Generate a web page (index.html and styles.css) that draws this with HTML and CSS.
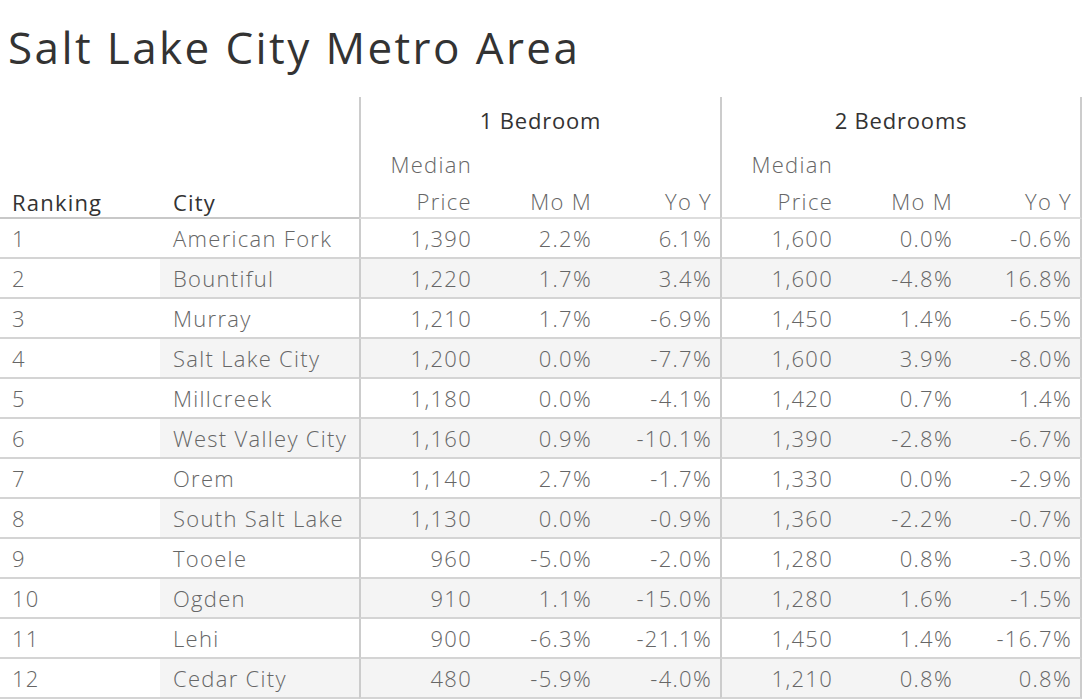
FILE: index.html
```html
<!DOCTYPE html>
<html lang="en">
<head>
<meta charset="utf-8">
<title>Salt Lake City Metro Area</title>
<link rel="stylesheet" href="styles.css">
</head>
<body>
<h1 class="title">Salt Lake City Metro Area</h1>
<table class="grid">
  <colgroup>
    <col class="c-rank">
    <col class="c-city">
    <col class="c-first">
    <col class="c-num">
    <col class="c-num">
    <col class="c-first">
    <col class="c-num">
    <col class="c-last">
  </colgroup>
  <thead>
    <tr class="h-group">
      <th class="hl" rowspan="2"><span class="lbl">Ranking</span></th>
      <th class="hl" rowspan="2"><span class="lbl">City</span></th>
      <th class="grp" colspan="3">1 Bedroom</th>
      <th class="grp" colspan="3">2 Bedrooms</th>
    </tr>
    <tr class="h-sub">
      <th class="sub first"><span class="lbl">Median<br>Price</span></th>
      <th class="sub"><span class="lbl">Mo M</span></th>
      <th class="sub"><span class="lbl">Yo Y</span></th>
      <th class="sub first"><span class="lbl">Median<br>Price</span></th>
      <th class="sub"><span class="lbl">Mo M</span></th>
      <th class="sub last"><span class="lbl">Yo Y</span></th>
    </tr>
  </thead>
  <tbody>
    <tr><td class="rank">1</td><td class="city">American Fork</td><td class="num first">1,390</td><td class="num">2.2%</td><td class="num">6.1%</td><td class="num first">1,600</td><td class="num">0.0%</td><td class="num last">-0.6%</td></tr>
    <tr class="alt"><td class="rank">2</td><td class="city">Bountiful</td><td class="num first">1,220</td><td class="num">1.7%</td><td class="num">3.4%</td><td class="num first">1,600</td><td class="num">-4.8%</td><td class="num last">16.8%</td></tr>
    <tr><td class="rank">3</td><td class="city">Murray</td><td class="num first">1,210</td><td class="num">1.7%</td><td class="num">-6.9%</td><td class="num first">1,450</td><td class="num">1.4%</td><td class="num last">-6.5%</td></tr>
    <tr class="alt"><td class="rank">4</td><td class="city">Salt Lake City</td><td class="num first">1,200</td><td class="num">0.0%</td><td class="num">-7.7%</td><td class="num first">1,600</td><td class="num">3.9%</td><td class="num last">-8.0%</td></tr>
    <tr><td class="rank">5</td><td class="city">Millcreek</td><td class="num first">1,180</td><td class="num">0.0%</td><td class="num">-4.1%</td><td class="num first">1,420</td><td class="num">0.7%</td><td class="num last">1.4%</td></tr>
    <tr class="alt"><td class="rank">6</td><td class="city">West Valley City</td><td class="num first">1,160</td><td class="num">0.9%</td><td class="num">-10.1%</td><td class="num first">1,390</td><td class="num">-2.8%</td><td class="num last">-6.7%</td></tr>
    <tr><td class="rank">7</td><td class="city">Orem</td><td class="num first">1,140</td><td class="num">2.7%</td><td class="num">-1.7%</td><td class="num first">1,330</td><td class="num">0.0%</td><td class="num last">-2.9%</td></tr>
    <tr class="alt"><td class="rank">8</td><td class="city">South Salt Lake</td><td class="num first">1,130</td><td class="num">0.0%</td><td class="num">-0.9%</td><td class="num first">1,360</td><td class="num">-2.2%</td><td class="num last">-0.7%</td></tr>
    <tr><td class="rank">9</td><td class="city">Tooele</td><td class="num first">960</td><td class="num">-5.0%</td><td class="num">-2.0%</td><td class="num first">1,280</td><td class="num">0.8%</td><td class="num last">-3.0%</td></tr>
    <tr class="alt"><td class="rank">10</td><td class="city">Ogden</td><td class="num first">910</td><td class="num">1.1%</td><td class="num">-15.0%</td><td class="num first">1,280</td><td class="num">1.6%</td><td class="num last">-1.5%</td></tr>
    <tr><td class="rank">11</td><td class="city">Lehi</td><td class="num first">900</td><td class="num">-6.3%</td><td class="num">-21.1%</td><td class="num first">1,450</td><td class="num">1.4%</td><td class="num last">-16.7%</td></tr>
    <tr class="alt"><td class="rank">12</td><td class="city">Cedar City</td><td class="num first">480</td><td class="num">-5.9%</td><td class="num">-4.0%</td><td class="num first">1,210</td><td class="num">0.8%</td><td class="num last">0.8%</td></tr>
  </tbody>
</table>
</body>
</html>
```

FILE: styles.css
```css
html, body {
  margin: 0;
  padding: 0;
  background: #ffffff;
}

body {
  font-family: "Open Sans", "Noto Sans", "Liberation Sans", sans-serif;
  color: #333333;
  overflow: hidden;
}

.title {
  margin: 0 0 20px 0;
  padding: 17px 0 0 8px;
  height: 60px;
  font-size: 44px;
  line-height: 60px;
  font-weight: 400;
  letter-spacing: 2.4px;
  color: #333333;
}

.grid {
  table-layout: fixed;
  border-collapse: separate;
  border-spacing: 0;
  width: 1081px;
  font-size: 22px;
  letter-spacing: 1.3px;
}

.c-rank { width: 160px; }
.c-city { width: 199px; }
.c-first { width: 121px; }
.c-num { width: 120px; }
.c-last { width: 121px; }

th, td {
  padding: 0;
  white-space: nowrap;
  overflow: hidden;
}

.lbl {
  display: block;
  margin-top: 3px;
  margin-bottom: -3px;
}

/* header */
.h-group .grp {
  height: 46px;
  line-height: 46px;
  font-weight: 400;
  color: #333333;
  text-align: center;
  letter-spacing: 0.8px;
  border-left: 2px solid #cccccc;
}

.h-group .grp:last-child {
  border-right: 2px solid #cccccc;
}

.h-group .hl {
  vertical-align: bottom;
  text-align: left;
  font-weight: 400;
  color: #333333;
  line-height: 36px;
  padding-left: 12px;
  letter-spacing: 1.2px;
  border-bottom: 2px solid #c8c8c8;
}

.h-group .hl + .hl {
  padding-left: 13px;
}

.sub {
  vertical-align: bottom;
  text-align: right;
  font-weight: 300;
  color: #666666;
  line-height: 37px;
  padding-right: 8px;
  border-bottom: 2px solid #dddddd;
}

.first { border-left: 2px solid #cccccc; }
.last { border-right: 2px solid #cccccc; }

/* body */
td {
  height: 38px;
  line-height: 38px;
  font-weight: 300;
  color: #666666;
  border-bottom: 2px solid #d4d4d4;
}

.rank {
  padding-left: 12px;
}

.city {
  padding-left: 13px;
}

.num {
  text-align: right;
  padding-right: 8px;
}

.alt .city,
.alt .num {
  background: #f4f4f4;
}
```
